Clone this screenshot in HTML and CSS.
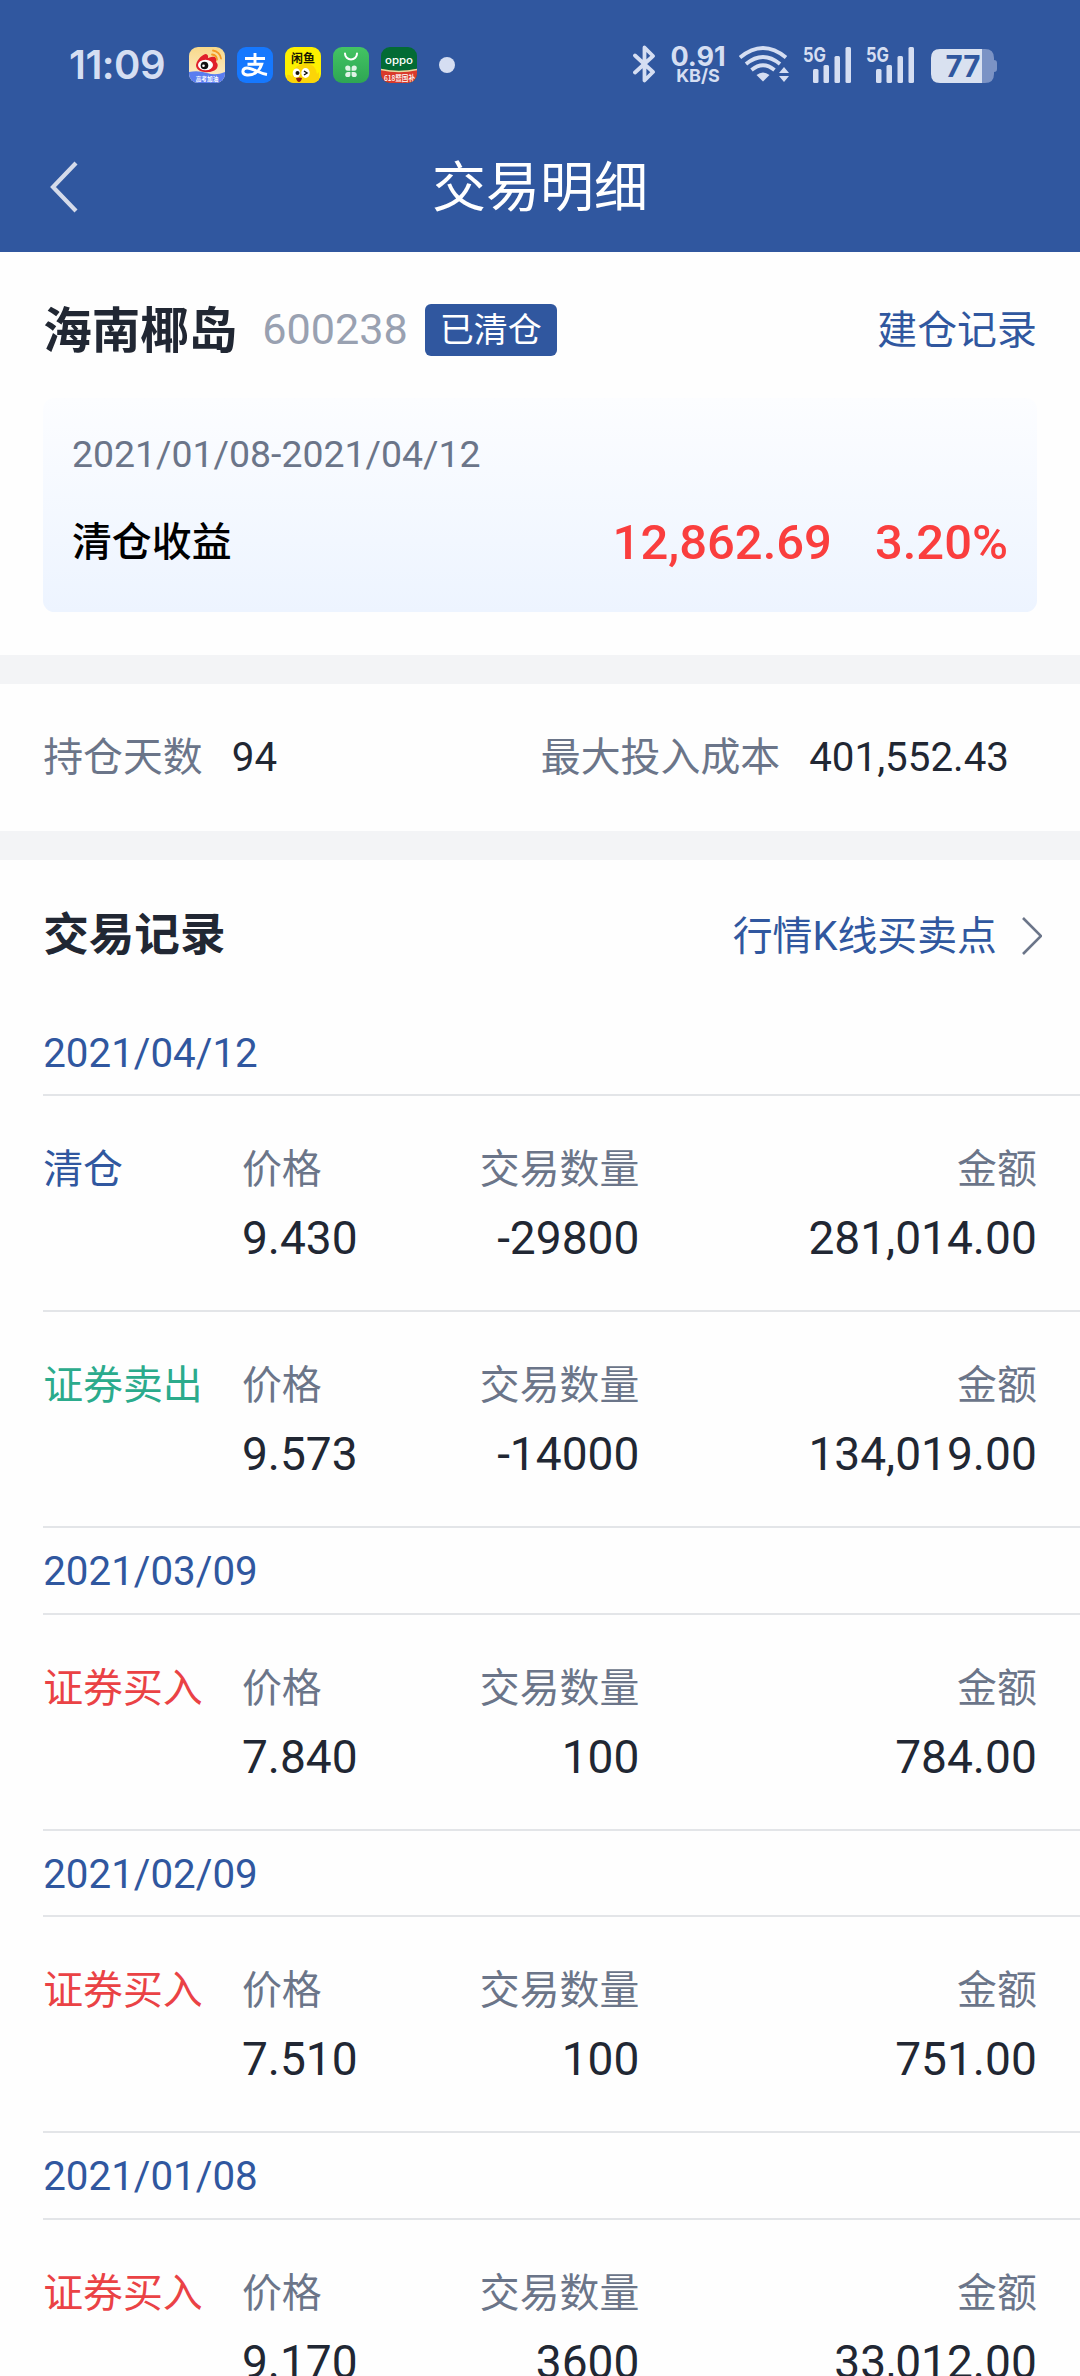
FILE: index.html
```html
<!DOCTYPE html>
<html lang="zh-CN">
<head>
<meta charset="utf-8">
<title>交易明细</title>
<link rel="stylesheet" href="styles.css">
</head>
<body>
<header class="top">
  <div class="status">
    <span class="clock">11:09</span>
    <div class="apps">
      <svg class="app" viewBox="0 0 36 36">
        <defs><linearGradient id="wb" x1="0" y1="0" x2="0" y2="1"><stop offset="0" stop-color="#f8d98a"/><stop offset="1" stop-color="#fdeed0"/></linearGradient><clipPath id="tile"><rect width="36" height="36" rx="9"/></clipPath></defs>
        <g clip-path="url(#tile)">
          <rect width="36" height="36" fill="url(#wb)"/>
          <path d="M0 25q9-2 18 1t18-1v11H0z" fill="#5b7df0"/>
          <path d="M7 18C8 12 14 7 17 7c3 1 2 4 2 4s6-3 8 0c1 2 0 4 0 4s3 2 1 6c-3 6-21 6-21-3z" fill="#e0202a"/>
          <ellipse cx="16.500" cy="18" rx="7.500" ry="5.200" fill="#fff"/>
          <circle cx="15.500" cy="18.500" r="3.800" fill="#111"/><circle cx="14.500" cy="18.800" r="1.300" fill="#fff"/>
          <path d="M23 7.500a5.500 5.500 0 0 1 5 5M24 3.500a9 9 0 0 1 8 8" fill="none" stroke="#f59a23" stroke-width="1.800" stroke-linecap="round"/>
          <text x="18" y="33.600" class="tiny" text-anchor="middle" font-size="5.700" fill="#fff">高考加油</text>
        </g>
      </svg>
      <svg class="app" viewBox="0 0 36 36"><rect width="36" height="36" rx="9" fill="#1678fe"/><path d="M8 11.500h20M18 6v11M10.500 17.200h14.200C22 25 16 28.500 10 28c-6-.600-5-7 0-7 6 0 11 5 20 6.500" fill="none" stroke="#fff" stroke-width="2.900"/></svg>
      <svg class="app" viewBox="0 0 36 36">
        <g clip-path="url(#tile)">
          <rect width="36" height="36" fill="#fdf000"/>
          <path d="M2 36V28q3-1 5 2Q8 18 19 17q11-2 13 10l2-2v11z" fill="#fbd508"/>
          <ellipse cx="11.500" cy="26" rx="3.800" ry="4.500" fill="#fff"/><ellipse cx="20.500" cy="26" rx="4.200" ry="5" fill="#fff"/>
          <circle cx="12.500" cy="26" r="2" fill="#16130a"/><path d="M19 24l3 2-3 2" fill="none" stroke="#16130a" stroke-width="1.500"/>
          <path d="M11 31q4-1 6 0-1 4-3 4t-3-4z" fill="#8d1e14"/>
          <text x="18" y="15.500" class="tiny" text-anchor="middle" font-size="12" fill="#1a1800">闲鱼</text>
        </g>
      </svg>
      <svg class="app" viewBox="0 0 36 36">
        <defs><linearGradient id="gr" x1="0" y1="0" x2="0" y2="1"><stop offset="0" stop-color="#43c463"/><stop offset="1" stop-color="#2ea653"/></linearGradient></defs>
        <rect width="36" height="36" rx="9" fill="url(#gr)"/>
        <path d="M12 6.500a6 6 0 0 0 12 0" fill="none" stroke="#fff" stroke-width="2" stroke-linecap="round"/>
        <g fill="#fff" opacity=".85"><path d="M17.400 23.700H15a2.600 2.600 0 1 1 2.400-2.500zM18.600 23.700H21a2.600 2.600 0 1 0-2.400-2.500zM17.400 24.900H15a2.600 2.600 0 1 0 2.400 2.500zM18.600 24.900H21a2.600 2.600 0 1 1-2.400 2.500z"/></g>
      </svg>
      <svg class="app" viewBox="0 0 36 36">
        <g clip-path="url(#tile)">
          <rect width="36" height="36" fill="#036b35"/>
          <path d="M0 22q18 4 36 0v14H0z" fill="#d93a2b"/>
          <path d="M0 22.500q18 4 36 0" fill="none" stroke="#e9dca0" stroke-width="1.500"/>
          <text x="4" y="17" class="latin" textLength="28" lengthAdjust="spacingAndGlyphs" font-size="10" font-weight="500" fill="#fff">oppo</text>
          <text x="3" y="33.500" class="tiny slim" textLength="31" lengthAdjust="spacingAndGlyphs" font-size="7.500" fill="#fff">618暨国补</text>
        </g>
      </svg>
    </div>
    <i class="dot"></i>
    <div class="signals">
      <svg class="bt" viewBox="0 0 24 40"><path d="M2 11.500l18 16.500-8.500 8.500v-33l8.500 8.500L2 28.500" fill="none" stroke="#d5def2" stroke-width="3.800" stroke-linejoin="round" stroke-linecap="round"/></svg>
      <div class="net"><b class="rate">0.91</b><b class="unit">KB/S</b></div>
      <svg class="wifi" viewBox="0 0 52 40">
        <g fill="none" stroke="#d5def2" stroke-width="3.800"><path d="M2 13.500q23-19 46 0M8 20q17-14 34 0M13.500 26q11.500-9.500 23 0"/></g>
        <path d="M18.500 31q6.500-5 13 0L25 37.500z" fill="#d5def2"/><path d="M46 23l5 6H41zM46 38l5-6H41z" fill="#d5def2"/>
      </svg>
      <svg class="cell" viewBox="0 0 50 40"><text x="0" y="17.500" class="latin" textLength="23" lengthAdjust="spacingAndGlyphs" font-size="20" font-weight="700">5G</text><rect x="10" y="25" width="5.500" height="14" rx="1.500"/><rect x="20.500" y="21" width="5.500" height="18" rx="1.500"/><rect x="31.500" y="12" width="5.500" height="27" rx="1.500"/><rect x="42.500" y="3" width="5.500" height="36" rx="1.500"/></svg>
      <svg class="cell" viewBox="0 0 50 40"><text x="0" y="17.500" class="latin" textLength="23" lengthAdjust="spacingAndGlyphs" font-size="20" font-weight="700">5G</text><rect x="10" y="25" width="5.500" height="14" rx="1.500"/><rect x="20.500" y="21" width="5.500" height="18" rx="1.500"/><rect x="31.500" y="12" width="5.500" height="27" rx="1.500"/><rect x="42.500" y="3" width="5.500" height="36" rx="1.500"/></svg>
      <svg class="battery" viewBox="0 0 66 40"><path d="M51 5h3q9 0 9 9v2q3 0 3 3v6q0 3-3 3v2q0 9-9 9h-3z" fill="#7b93c5"/><path d="M9 5h42v34H9q-9 0-9-9V14q0-9 9-9z" fill="#d9e1f0"/><text x="32" y="33" class="latin" text-anchor="middle" textLength="35" lengthAdjust="spacingAndGlyphs" font-size="30" font-weight="700" fill="#30579f">77</text></svg>
    </div>
  </div>
  <div class="nav">
    <svg class="back" viewBox="0 0 30 54"><path d="M27 3L4 27l23 24" fill="none" stroke="#d5dbea" stroke-width="4.200"/></svg>
    <h1 class="title">交易明细</h1>
  </div>
</header>

<section class="summary">
  <div class="stock">
    <h2 class="name">海南椰岛</h2>
    <span class="code">600238</span>
    <span class="badge">已清仓</span>
    <a class="link push">建仓记录</a>
  </div>
  <div class="card">
    <div class="range">2021/01/08-2021/04/12</div>
    <div class="profit"><span class="plabel">清仓收益</span><span class="gain">12,862.69</span><span class="pct">3.20%</span></div>
  </div>
</section>

<section class="stats">
  <div class="stat"><span class="label">持仓天数</span><span class="figure">94</span></div>
  <div class="stat"><span class="label">最大投入成本</span><span class="figure">401,552.43</span></div>
</section>

<section class="records">
  <div class="head">
    <h2 class="heading">交易记录</h2>
    <a class="link">行情K线买卖点</a>
    <svg class="more" viewBox="0 0 20 38"><path d="M1 1l18 18L1 37" fill="none" stroke="#6b7589" stroke-width="2.600"/></svg>
  </div>

  <h3 class="date">2021/04/12</h3>
  <div class="entry"><span class="kind clear">清仓</span><div class="cell-l"><span class="label">价格</span><span class="num">9.430</span></div><div class="cell-r"><span class="label">交易数量</span><span class="num">-29800</span></div><div class="cell-r"><span class="label">金额</span><span class="num">281,014.00</span></div></div>
  <div class="entry"><span class="kind sell">证券卖出</span><div class="cell-l"><span class="label">价格</span><span class="num">9.573</span></div><div class="cell-r"><span class="label">交易数量</span><span class="num">-14000</span></div><div class="cell-r"><span class="label">金额</span><span class="num">134,019.00</span></div></div>

  <h3 class="date">2021/03/09</h3>
  <div class="entry"><span class="kind buy">证券买入</span><div class="cell-l"><span class="label">价格</span><span class="num">7.840</span></div><div class="cell-r"><span class="label">交易数量</span><span class="num">100</span></div><div class="cell-r"><span class="label">金额</span><span class="num">784.00</span></div></div>

  <h3 class="date">2021/02/09</h3>
  <div class="entry"><span class="kind buy">证券买入</span><div class="cell-l"><span class="label">价格</span><span class="num">7.510</span></div><div class="cell-r"><span class="label">交易数量</span><span class="num">100</span></div><div class="cell-r"><span class="label">金额</span><span class="num">751.00</span></div></div>

  <h3 class="date">2021/01/08</h3>
  <div class="entry last"><span class="kind buy">证券买入</span><div class="cell-l"><span class="label">价格</span><span class="num">9.170</span></div><div class="cell-r"><span class="label">交易数量</span><span class="num">3600</span></div><div class="cell-r"><span class="label">金额</span><span class="num">33,012.00</span></div></div>
</section>
</body>
</html>
```
FILE: styles.css
```css
* { box-sizing: border-box; }
html { height: 2376px; overflow: hidden; }
body {
  margin: 0;
  height: 2376px;
  overflow: hidden;
  background: #fefefe;
  color: #212733;
  font: 400 40.32px/58px Roboto, "Noto Sans CJK SC", sans-serif;
}
h1, h2, h3 { margin: 0; font-size: inherit; font-weight: 400; }
svg { display: block; flex: none; }

.top { height: 252px; background: #30579f; color: #fff; }
.status { display: flex; height: 126px; padding: 44px 83px 0 69px; color: #d5def2; }
.clock { width: 120px; font: 600 40px/42px Inter, sans-serif; letter-spacing: -0.5px; }
.apps { display: flex; gap: 12px; padding-top: 3px; }
.app { width: 36px; height: 36px; }
.tiny { font-family: "Noto Sans CJK SC", sans-serif; font-weight: 700; }
.slim { font-weight: 500; }
.latin { font-family: Inter, sans-serif; }
.dot { width: 16px; height: 16px; margin: 13px 0 0 22px; border-radius: 50%; background: #d5def2; }
.signals { display: flex; margin-left: auto; }
.bt { width: 24px; height: 40px; margin-right: 14px; }
.net { display: flex; flex-direction: column; align-items: center; width: 54px; margin-right: 13px; padding-top: 1px; }
.rate { font: 700 27px/24px Inter, sans-serif; }
.unit { font: 700 18px/14px Inter, sans-serif; }
.wifi { width: 52px; height: 40px; margin-right: 13px; }
.cell { width: 50px; height: 40px; margin-right: 13px; fill: #d5def2; }
.battery { width: 66px; height: 40px; margin-left: 2px; }

.nav { display: grid; grid-template-columns: 80px 1fr 80px; align-items: center; height: 126px; }
.back { width: 30px; height: 54px; margin: 0 0 5px 49px; }
.title { text-align: center; font-size: 54px; line-height: 80px; }

.summary { height: 403px; padding: 40px 43.2px 0; }
.stock { display: flex; align-items: center; height: 76px; }
.name { padding-top: 3px; font-size: 48.5px; font-weight: 700; }
.code { margin-left: 25px; font-size: 43.2px; color: #99a1b1; }
.badge { margin: 0 0 0 17px; padding: 0 15px; height: 52px; border-radius: 6px; background: #30579f; color: #fff; font-size: 34px; line-height: 52px; }
.link { padding-top: 1px; font-size: 39.9px; color: #30579f; }
.push { margin-left: auto; }
.card { height: 214px; margin-top: 29.5px; padding: 27px 28.8px 0; border-radius: 11.5px; background: linear-gradient(#fcfdff, #edf4ff); }
.range { font-size: 37.44px; line-height: 58px; color: #6b7589; }
.profit { display: flex; align-items: center; height: 58px; margin-top: 31px; }
.plabel { color: #000; font-size: 39.9px; font-weight: 500; }
.gain, .pct { font-size: 48.96px; font-weight: 500; color: #fa3e3e; }
.gain { margin-left: auto; }
.pct { margin-left: 43px; }

.stats { display: flex; justify-content: space-between; align-items: center; height: 205px; padding: 0 71px 0 43.2px; border: solid #f3f4f6; border-width: 29px 0; }
.stat { display: flex; align-items: center; gap: 29px; }
.label { font-size: 39.9px; color: #6b7589; }

.head { display: flex; align-items: center; height: 150px; padding: 2px 38px 0 43.2px; }
.heading { margin-right: auto; font-size: 45.6px; font-weight: 700; }
.more { width: 20px; height: 38px; margin-left: 25px; }
.date { height: 86.4px; margin-left: 43.2px; border-bottom: 2px solid #e3e5e8; line-height: 88px; color: #30579f; }
.entry { display: grid; grid-template-columns: 20% 20% 20% 40%; height: 216px; margin-left: 43.2px; padding: 45px 0 0; border-bottom: 2px solid #e3e5e8; }
.entry { padding-right: 43.2px; }
.last { height: 158px; border-bottom: 0; }
.cell-l, .cell-r { display: flex; flex-direction: column; gap: 9px; }
.cell-r { align-items: flex-end; }
.num { font-size: 46.08px; line-height: 60px; }
.kind { font-size: 39.9px; white-space: nowrap; }
.clear { color: #30579f; }
.sell { color: #2bab8c; }
.buy { color: #ea4245; }
```
